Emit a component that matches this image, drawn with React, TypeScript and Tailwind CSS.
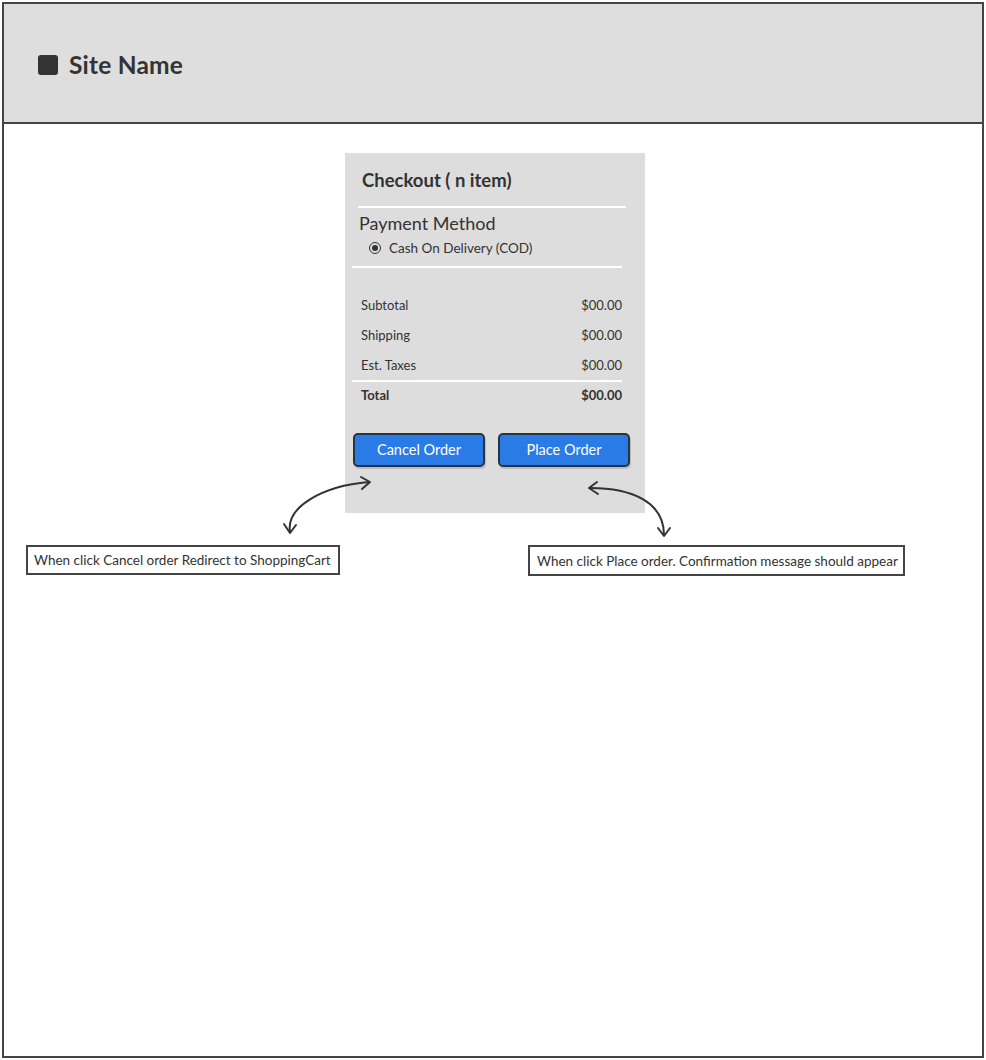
import React from "react";

const font = { fontFamily: '"Lato", "Noto Sans", sans-serif' };

export default function App() {
  return (
    <div className="w-[986px] h-[1060px] bg-white p-[2px] text-[#333]" style={font}>
      <div className="relative w-full h-full border-2 border-[#444] flex flex-col">
        <header className="h-[120px] bg-[#dedede] border-b-2 border-[#444] flex items-center pl-[34px] pt-[4px] gap-[11px]">
          <div className="w-[20px] h-[20px] rounded-[3px] bg-[#333]" />
          <span className="text-[24.5px] font-bold tracking-[0.2px]">Site Name</span>
        </header>
        <main className="flex flex-col">
          <div className="mt-[29px] ml-[341px] w-[300px] h-[360px] bg-[#dddddd] flex flex-col">
            <div className="pl-[17px] pt-[16px] text-[18.5px] font-bold leading-[22px]">Checkout ( n item)</div>
            <div className="mt-[15px] ml-[13px] w-[268px] h-[2px] bg-white" />
            <div className="pl-[14px] mt-[3px] text-[18px] leading-[24px]">Payment Method</div>
            <div className="flex items-center pl-[24px] mt-[4px] gap-[8px] text-[13.5px] leading-[18px]">
              <span className="w-[12px] h-[12px] rounded-full border-[1.5px] border-[#333] flex items-center justify-center">
                <span className="w-[6px] h-[6px] rounded-full bg-[#333]" />
              </span>
              <span>Cash On Delivery (COD)</span>
            </div>
            <div className="mt-[9px] ml-[7px] w-[270px] h-[2px] bg-white" />
            <div className="mt-[22px] flex flex-col text-[13px]">
              <div className="flex justify-between pl-[16px] pr-[23px] h-[30px] items-center leading-[18px]">
                <span>Subtotal</span><span>$00.00</span>
              </div>
              <div className="flex justify-between pl-[16px] pr-[23px] h-[30px] items-center leading-[18px]">
                <span>Shipping</span><span>$00.00</span>
              </div>
              <div className="flex justify-between pl-[16px] pr-[23px] h-[30px] items-center leading-[18px]">
                <span>Est. Taxes</span><span>$00.00</span>
              </div>
              <div className="ml-[7px] w-[270px] h-[2px] bg-white" />
              <div className="flex justify-between pl-[16px] pr-[23px] h-[26px] items-center leading-[18px] font-bold">
                <span>Total</span><span>$00.00</span>
              </div>
            </div>
            <div className="flex pl-[8px] gap-[13px] mt-[25px]">
              <button className="w-[132px] h-[34px] rounded-[5px] bg-[#2b7be6] border-2 border-[#2a3340] text-white text-[14.5px] shadow-[1px_2px_0_rgba(0,0,0,0.15)]">Cancel Order</button>
              <button className="w-[132px] h-[34px] rounded-[5px] bg-[#2b7be6] border-2 border-[#2a3340] text-white text-[14.5px] shadow-[1px_2px_0_rgba(0,0,0,0.15)]">Place Order</button>
            </div>
          </div>
          <div className="flex mt-[32px] text-[13.5px] leading-[16px]">
            <div className="ml-[22px] w-[314px] h-[30px] border-2 border-[#444] flex items-center pl-[6px] whitespace-nowrap">When click Cancel order Redirect to ShoppingCart</div>
            <div className="ml-[188px] w-[377px] h-[31px] border-2 border-[#444] flex items-center pl-[7px] whitespace-nowrap">When click Place order. Confirmation message should appear</div>
          </div>
        </main>
        <svg className="absolute left-0 top-0 pointer-events-none" width="982" height="1056" viewBox="2 2 982 1056" fill="none" stroke="#333" strokeWidth="2" strokeLinecap="round" strokeLinejoin="round">
          <path d="M288 530 C 284 505, 320 484, 367 480" />
          <path d="M359 475 L 368 480 L 360 487" />
          <path d="M282 522 L 288 531 L 294 523" />
          <path d="M588 486 C 630 486, 662 500, 662 533" />
          <path d="M595 480 L 587 486 L 596 492" />
          <path d="M656 526 L 662 534 L 668 526" />
        </svg>
      </div>
    </div>
  );
}
